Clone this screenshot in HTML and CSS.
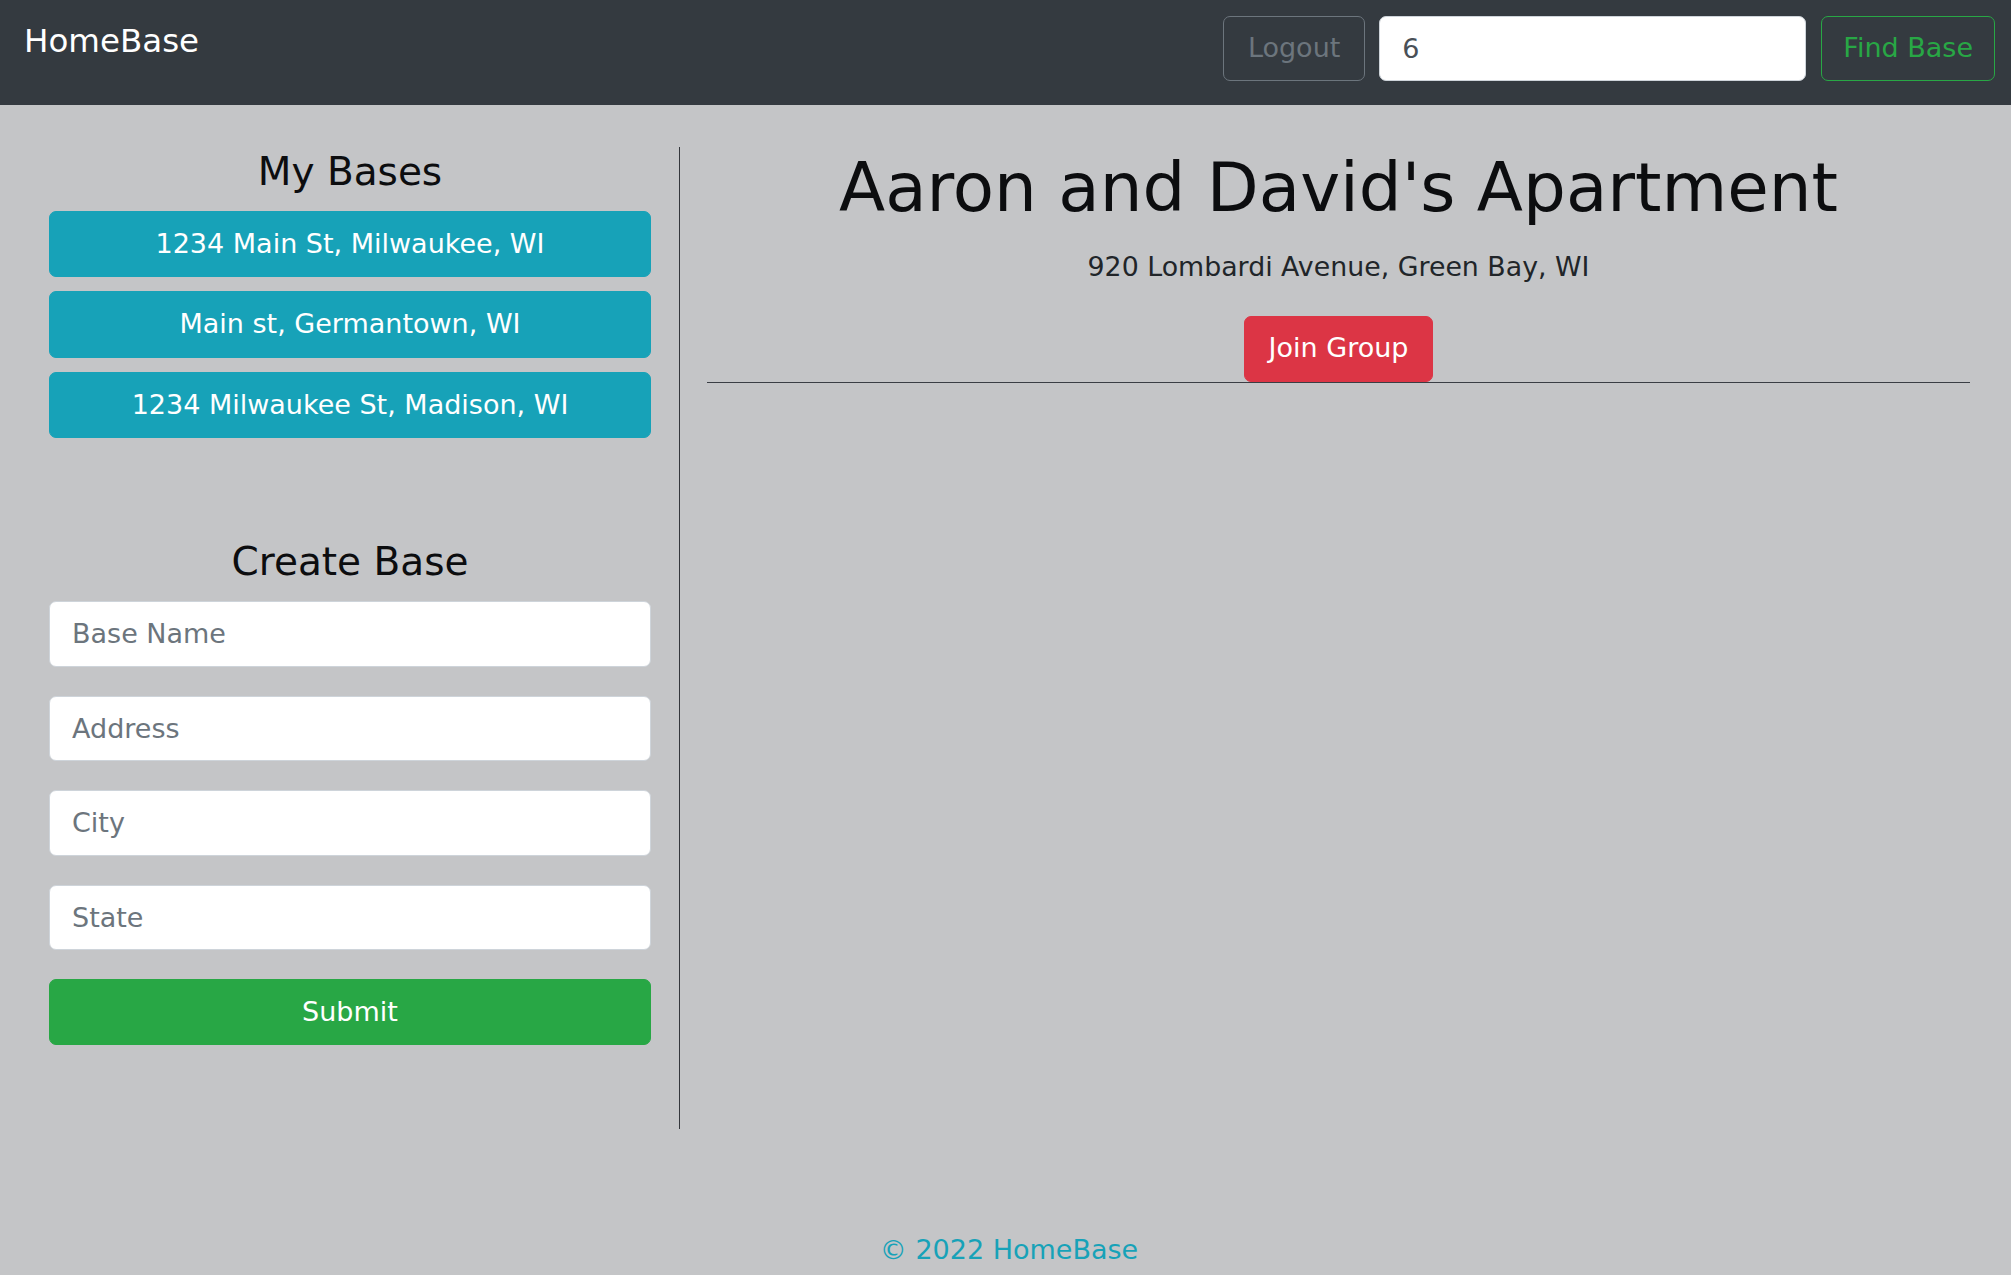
FILE: index.html
```html
<!DOCTYPE html>
<html lang="en">
<head>
<meta charset="utf-8">
<title>HomeBase</title>
<link rel="stylesheet" href="styles.css">
</head>
<body>
<nav class="navbar">
  <a class="brand" href="#">HomeBase</a>
  <form class="nav-form">
    <button type="button" class="btn btn-outline-secondary">Logout</button>
    <input class="nav-input" type="text" value="6">
    <button type="button" class="btn btn-outline-success">Find Base</button>
  </form>
</nav>

<main class="main">
  <section class="left">
    <h4 class="side-title">My Bases</h4>
    <div class="base-list">
      <button type="button" class="btn btn-info btn-block">1234 Main St, Milwaukee, WI</button>
      <button type="button" class="btn btn-info btn-block">Main st, Germantown, WI</button>
      <button type="button" class="btn btn-info btn-block">1234 Milwaukee St, Madison, WI</button>
    </div>

    <h4 class="side-title create-title">Create Base</h4>
    <form class="create-form">
      <input class="field" type="text" placeholder="Base Name">
      <input class="field" type="text" placeholder="Address">
      <input class="field" type="text" placeholder="City">
      <input class="field" type="text" placeholder="State">
      <button type="button" class="btn btn-success btn-block">Submit</button>
    </form>
  </section>

  <section class="right">
    <h1 class="title">Aaron and David's Apartment</h1>
    <p class="address">920 Lombardi Avenue, Green Bay, WI</p>
    <button type="button" class="btn btn-danger">Join Group</button>
    <hr class="divider">
  </section>
</main>

<footer class="footer">© 2022 HomeBase</footer>
</body>
</html>
```

FILE: styles.css
```css
* {
  box-sizing: border-box;
}

html {
  background: #c4c5c7;
}

body {
  margin: 0;
  background: #c4c5c7;
  font-family: "DejaVu Sans", "Liberation Sans", sans-serif;
  font-size: 27px;
  line-height: 1.5;
  color: #212529;
}

/* ---------- navbar ---------- */
.navbar {
  height: 105px;
  background: #343a40;
  display: flex;
  align-items: flex-start;
  justify-content: space-between;
  padding: 16px 16px 0 24px;
}

.brand {
  margin-top: 1px;
  font-size: 32.5px;
  line-height: 1.5;
  color: #ffffff;
  text-decoration: none;
}

.nav-form {
  display: flex;
  align-items: flex-start;
  margin: 0;
}

.nav-input {
  width: 427px;
  height: 65px;
  margin: 0 15px 0 14px;
  padding: 0 22px;
  border: 1px solid #ced4da;
  border-radius: 7px;
  background: #ffffff;
  font-family: inherit;
  font-size: 27px;
  color: #495057;
  outline: none;
}

/* ---------- buttons ---------- */
.btn {
  display: inline-flex;
  align-items: center;
  justify-content: center;
  height: 66px;
  padding: 0 24px;
  border: 1px solid transparent;
  border-radius: 7px;
  font-family: inherit;
  font-size: 27px;
  line-height: 1.5;
  font-weight: 400;
  cursor: pointer;
  white-space: nowrap;
}

.btn-block {
  display: flex;
  width: 100%;
}

.btn-outline-secondary {
  height: 65px;
  background: transparent;
  border-color: #6c757d;
  color: #6c757d;
}

.btn-outline-success {
  height: 65px;
  padding: 0 21px;
  background: transparent;
  border-color: #28a745;
  color: #28a745;
}

.btn-info {
  background: #17a2b8;
  border-color: #17a2b8;
  color: #ffffff;
}

.btn-success {
  background: #28a745;
  border-color: #28a745;
  color: #ffffff;
}

.btn-danger {
  background: #dc3545;
  border-color: #dc3545;
  color: #ffffff;
}

/* ---------- main ---------- */
.main {
  display: flex;
  height: 982px;
  margin-top: 42px;
  padding-left: 49px;
}

.left {
  width: 631px;
  padding-right: 28px;
  border-right: 1px solid #34373c;
}

.side-title {
  margin: 2px 0 15px;
  font-size: 39px;
  line-height: 1.2;
  font-weight: 400;
  text-align: center;
  color: #0c0d0f;
}

.create-title {
  margin-top: 101px;
}

.base-list {
  display: flex;
  flex-direction: column;
  gap: 14px;
}

.base-list .btn {
  height: 66.5px;
}

.create-form {
  display: flex;
  flex-direction: column;
  gap: 29px;
  margin: 0;
}

.field {
  width: 100%;
  height: 65.5px;
  padding: 0 22px;
  border: 1px solid #ced4da;
  border-radius: 7px;
  background: #ffffff;
  font-family: inherit;
  font-size: 27px;
  color: #495057;
  outline: none;
}

.field::placeholder {
  color: #6c757d;
  opacity: 1;
}

.right {
  width: 1290px;
  padding-left: 27px;
  text-align: center;
}

.title {
  margin: 0 0 19px;
  font-size: 67.5px;
  line-height: 1.2;
  font-weight: 400;
  color: #0c0d0f;
}

.address {
  margin: 0 0 28.5px;
  font-size: 26.8px;
}

.divider {
  margin: 0;
  border: 0;
  border-top: 1px solid #3a3e44;
}

/* ---------- footer ---------- */
.footer {
  margin-top: 101px;
  padding-left: 7px;
  text-align: center;
  color: #17a2b8;
  line-height: 1.5;
}
```
